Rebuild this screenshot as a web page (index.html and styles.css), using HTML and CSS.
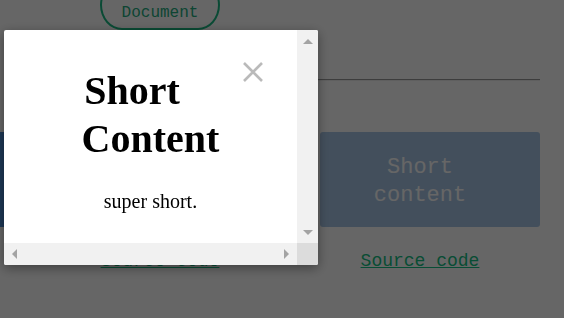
FILE: index.html
```html
<!DOCTYPE html>
<html lang="en">
<head>
    <meta charset="UTF-8">
    <meta name="viewport" content="width=device-width, initial-scale=1.0">
    <title>Modal demo</title>
    <link rel="stylesheet" href="styles.css">
</head>
<body>
    <div class="page">
        <div class="top">
            <button class="doc-btn">Document</button>
        </div>
        <hr class="rule">
        <div class="demos">
            <div class="demo">
                <div class="panel panel-long"></div>
                <a class="src" href="#">Source code</a>
            </div>
            <div class="demo">
                <div class="panel panel-short">Short<br>content</div>
                <a class="src" href="#">Source code</a>
            </div>
        </div>
    </div>

    <div class="backdrop">
        <div class="dialog">
            <div class="dialog-body">
                <button class="close" aria-label="Close">
                    <svg width="20" height="20" viewBox="0 0 20 20">
                        <path d="M1 1 L19 19 M19 1 L1 19" stroke="#bababa" stroke-width="2.6" fill="none"/>
                    </svg>
                </button>
                <h1>Short Content</h1>
                <p>super short.</p>
            </div>
            <div class="vbar">
                <span class="arrow up"></span>
                <span class="arrow down"></span>
            </div>
            <div class="hbar">
                <span class="arrow left"></span>
                <span class="arrow right"></span>
            </div>
            <div class="corner"></div>
        </div>
    </div>
</body>
</html>
```

FILE: styles.css
```css
* {
    box-sizing: border-box;
}
body {
    margin: 0;
    font-family: "Liberation Mono", monospace;
    background-color: #fff;
    overflow: hidden;
}
.page {
    padding-left: 30px;
}
.top {
    width: 260px;
    display: flex;
    justify-content: center;
}
.doc-btn {
    margin-top: -20px;
    height: 50px;
    padding: 16px 20px 0;
    border: 2px solid #1aba84;
    border-radius: 22px / 25px;
    background-color: #fff;
    color: #24ad80;
    font: 16px/30px "Liberation Mono", monospace;
}
.rule {
    width: 510px;
    height: 0;
    margin: 49px 0 0;
    border: 0;
    border-top: 1px solid #9a9a9a;
    border-bottom: 1px solid #eee;
}
.demos {
    display: grid;
    grid-template-columns: 260px 260px;
    margin-top: 51px;
}
.demo {
    display: flex;
    flex-direction: column;
    align-items: center;
}
.panel {
    height: 95px;
    border-radius: 3px;
}
.panel-long {
    align-self: stretch;
    margin-left: -40px;
    background-color: #4a8ad4;
}
.panel-short {
    align-self: flex-start;
    margin-left: 30px;
    width: 220px;
    padding: 5px 20px 0 0;
    display: flex;
    align-items: center;
    justify-content: center;
    text-align: center;
    background-color: #a8c6e6;
    color: #fff;
    font-size: 22px;
    line-height: 28px;
}
.src {
    margin-top: 24px;
    font-size: 18px;
    color: #16c084;
    text-decoration: underline;
}

/* modal */
.backdrop {
    position: fixed;
    inset: 0;
    padding: 30px 0 0 4px;
    background-color: rgba(0, 0, 0, 0.6);
}
.dialog {
    display: grid;
    grid-template-columns: 293px 21px;
    grid-template-rows: 213px 22px;
    width: 314px;
    background-color: #fff;
    border-radius: 2px;
    box-shadow: 0 3px 12px rgba(0, 0, 0, 0.4);
    overflow: hidden;
}
.dialog-body {
    padding: 10px 20px;
    overflow: hidden;
    font-family: "Liberation Serif", serif;
    font-size: 20px;
    color: #000;
    text-align: center;
}
.dialog-body h1 {
    font-size: 40px;
    line-height: 48px;
    margin: 0.67em 0;
}
.dialog-body p {
    margin: 20px 0;
}
.close {
    float: right;
    width: 37px;
    height: 42px;
    padding: 22px 0 0 3px;
    border: 0;
    background: none;
}
.close svg {
    display: block;
}
.vbar {
    display: flex;
    flex-direction: column;
    justify-content: space-between;
    align-items: center;
    padding: 9px 0 8px;
    background-color: #f1f1f1;
}
.hbar {
    display: flex;
    justify-content: space-between;
    align-items: center;
    padding: 0 8px;
    background-color: #f1f1f1;
}
.corner {
    background-color: #dcdcdc;
}
.arrow {
    width: 0;
    height: 0;
    border: 5px solid transparent;
}
.arrow.up {
    border-top: 0;
    border-bottom-color: #a3a3a3;
}
.arrow.down {
    border-bottom: 0;
    border-top-color: #a3a3a3;
}
.arrow.left {
    border-left: 0;
    border-right-color: #a3a3a3;
}
.arrow.right {
    border-right: 0;
    border-left-color: #a3a3a3;
}
```
